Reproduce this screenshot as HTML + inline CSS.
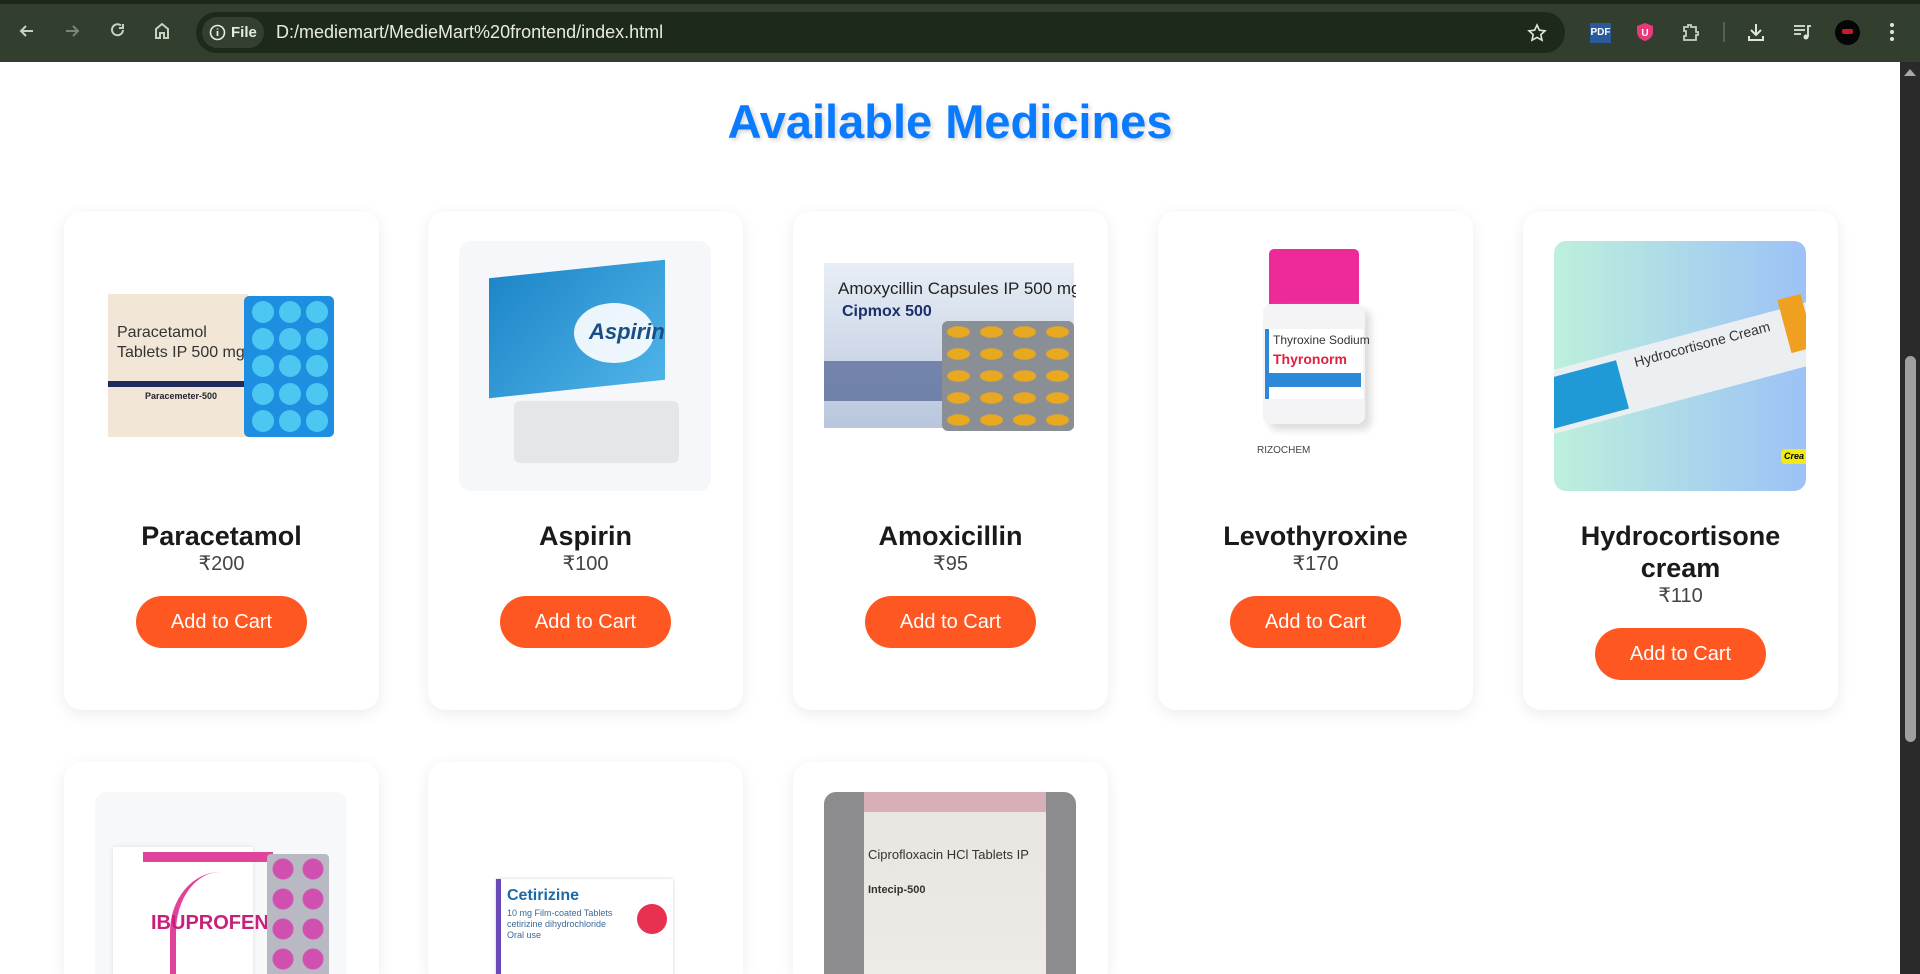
<!DOCTYPE html>
<html style="width:1920px;height:974px;overflow:hidden"><head><meta charset="utf-8"><style>
*{box-sizing:border-box;margin:0;padding:0}
body{width:1920px;height:974px;overflow:hidden;background:#fff;font-family:"Liberation Sans",Arial,sans-serif;position:relative}
.chrome{position:absolute;left:0;top:0;width:1920px;height:62px;background:#323f2f}
.topstrip{position:absolute;left:0;top:0;width:1920px;height:4px;background:#1c2719}
.pill{position:absolute;left:196px;top:12px;width:1369px;height:41px;border-radius:21px;background:#1d2919}
.filechip{position:absolute;left:202px;top:17px;width:62px;height:31px;border-radius:16px;background:#34402f;color:#e6ecdf;font-size:15px;font-weight:bold;line-height:31px;padding-left:29px}
.url{position:absolute;left:276px;top:22px;color:#e8ecdf;font-size:18px}
.ic{position:absolute;top:21px}
.scroll{position:absolute;left:1900px;top:62px;width:20px;height:912px;background:#2a2a2a}
.thumb{position:absolute;left:1905px;top:356px;width:11px;height:386px;background:#9f9f9f;border-radius:6px}
h1{position:absolute;left:0;width:1900px;top:94px;text-align:center;color:#0a7bff;font-size:47px;font-weight:bold;text-shadow:2px 2px 4px rgba(0,0,0,.18)}
.card{position:absolute;width:315px;height:499px;background:#fff;border-radius:18px;box-shadow:0 4px 16px rgba(0,0,0,.08);text-align:center;overflow:hidden}
.img{position:absolute;left:31px;top:30px;width:252px;height:250px;overflow:hidden;border-radius:12px}
.name{position:absolute;left:0;width:315px;top:309px;font-size:27px;font-weight:bold;color:#1a1a1a;line-height:32px}
.price{position:absolute;left:0;width:315px;font-size:20px;color:#444;line-height:24px}
.btn{position:absolute;left:72px;width:171px;height:52px;border-radius:26px;background:#ff5722;color:#fff;font-size:20px;line-height:52px}
.a{position:absolute}
.r2{height:212px;border-radius:18px 18px 0 0}
</style></head><body>
<div class="chrome"></div><div class="topstrip"></div>
<svg class="ic" style="left:17px" width="20" height="20" viewBox="0 0 20 20"><path d="M16 10H4M9 5l-5 5 5 5" stroke="#c7d1c0" stroke-width="2" fill="none"/></svg>
<svg class="ic" style="left:62px" width="20" height="20" viewBox="0 0 20 20"><path d="M4 10h12M11 5l5 5-5 5" stroke="#7b8676" stroke-width="2" fill="none"/></svg>
<svg class="ic" style="left:108px" width="20" height="20" viewBox="0 0 20 20"><path d="M15 9a5.5 5.5 0 1 1-2-4.5M15 3v4h-4" stroke="#c7d1c0" stroke-width="2" fill="none"/></svg>
<svg class="ic" style="left:152px" width="20" height="20" viewBox="0 0 20 20"><path d="M4 17V8l6-5 6 5v9h-4v-5H8v5z" stroke="#c7d1c0" stroke-width="2" fill="none"/></svg>
<div class="pill"></div>
<div class="filechip"><svg style="position:absolute;left:7px;top:7px" width="17" height="17" viewBox="0 0 17 17"><circle cx="8.5" cy="8.5" r="7" stroke="#e6ecdf" stroke-width="1.6" fill="none"/><path d="M8.5 7v5M8.5 4.5v1" stroke="#e6ecdf" stroke-width="1.8"/></svg>File</div>
<div class="url">D:/mediemart/MedieMart%20frontend/index.html</div>
<svg class="ic" style="left:1527px;top:23px" width="20" height="20" viewBox="0 0 20 20"><path d="M10 2l2.4 5.2 5.6.6-4.2 3.8 1.2 5.6L10 14.4 5 17.2l1.2-5.6L2 7.8l5.6-.6z" stroke="#dfe6d8" stroke-width="1.6" fill="none"/></svg>
<div class="a" style="left:1590px;top:23px;width:21px;height:20px;background:#2a5a9a;color:#fff;font-size:10px;font-weight:bold;line-height:20px;text-align:center">PDF</div>
<svg class="ic" style="left:1636px;top:22px" width="18" height="20" viewBox="0 0 18 20"><path d="M9 1l8 3v6c0 5-4 8-8 9-4-1-8-4-8-9V4z" fill="#e83a7a"/><text x="9" y="14" font-size="10" font-weight="bold" fill="#fff" text-anchor="middle" font-family="Liberation Sans">U</text></svg>
<svg class="ic" style="left:1681px;top:22px" width="20" height="20" viewBox="0 0 20 20"><path d="M3 5h4V3h3v2h5v5h2v3h-2v5H3v-4h2V9H3z" stroke="#c7d1c0" stroke-width="1.8" fill="none"/></svg>
<div class="a" style="left:1723px;top:22px;width:2px;height:20px;background:#55614f"></div>
<svg class="ic" style="left:1746px;top:22px" width="20" height="20" viewBox="0 0 20 20"><path d="M10 2v10M5 8l5 5 5-5M3 14v4h14v-4" stroke="#dfe6d8" stroke-width="2" fill="none"/></svg>
<svg class="ic" style="left:1792px;top:22px" width="20" height="20" viewBox="0 0 20 20"><path d="M2 4h11M2 8h11M2 12h7" stroke="#dfe6d8" stroke-width="1.8"/><circle cx="14" cy="15" r="2.5" fill="#dfe6d8"/><path d="M16 15V4h3" stroke="#dfe6d8" stroke-width="1.8" fill="none"/></svg>
<div class="a" style="left:1835px;top:20px;width:25px;height:25px;border-radius:50%;background:#050505"><span style="position:absolute;left:7px;top:9px;width:11px;height:5px;background:#c0202a;border-radius:2px"></span></div>
<svg class="ic" style="left:1888px;top:22px" width="8" height="20" viewBox="0 0 8 20"><circle cx="4" cy="3" r="2" fill="#dfe6d8"/><circle cx="4" cy="10" r="2" fill="#dfe6d8"/><circle cx="4" cy="17" r="2" fill="#dfe6d8"/></svg>

<div class="scroll"></div>
<svg class="a" style="left:1904px;top:68px" width="12" height="8"><path d="M0 8L6 1l6 7z" fill="#a8a8a8"/></svg>
<div class="thumb"></div>

<h1>Available Medicines</h1>

<div class="card" style="left:64px;top:211px">
 <div class="img">
  <div class="a" style="left:13px;top:53px;width:140px;height:143px;background:#f2e6d6"></div>
  <div class="a" style="left:22px;top:82px;font-size:16px;color:#333;text-align:left;line-height:20px">Paracetamol<br>Tablets IP 500 mg</div>
  <div class="a" style="left:13px;top:140px;width:136px;height:6px;background:#1f2a5e"></div>
  <div class="a" style="left:50px;top:150px;font-size:9px;font-weight:bold;color:#223">Paracemeter-500</div>
  <div class="a" style="left:149px;top:55px;width:90px;height:141px;background:#1e8fe0;border-radius:5px;display:grid;grid-template-columns:repeat(3,22px);gap:5px;padding:5px 8px">
   <i style="width:22px;height:22px;border-radius:50%;background:#4cc7f2"></i><i style="width:22px;height:22px;border-radius:50%;background:#4cc7f2"></i><i style="width:22px;height:22px;border-radius:50%;background:#4cc7f2"></i><i style="width:22px;height:22px;border-radius:50%;background:#4cc7f2"></i><i style="width:22px;height:22px;border-radius:50%;background:#4cc7f2"></i><i style="width:22px;height:22px;border-radius:50%;background:#4cc7f2"></i><i style="width:22px;height:22px;border-radius:50%;background:#4cc7f2"></i><i style="width:22px;height:22px;border-radius:50%;background:#4cc7f2"></i><i style="width:22px;height:22px;border-radius:50%;background:#4cc7f2"></i><i style="width:22px;height:22px;border-radius:50%;background:#4cc7f2"></i><i style="width:22px;height:22px;border-radius:50%;background:#4cc7f2"></i><i style="width:22px;height:22px;border-radius:50%;background:#4cc7f2"></i><i style="width:22px;height:22px;border-radius:50%;background:#4cc7f2"></i><i style="width:22px;height:22px;border-radius:50%;background:#4cc7f2"></i><i style="width:22px;height:22px;border-radius:50%;background:#4cc7f2"></i>
  </div>
 </div>
 <div class="name">Paracetamol</div><div class="price" style="top:341px">₹200</div><div class="btn" style="top:385px">Add to Cart</div>
</div>

<div class="card" style="left:428px;top:211px">
 <div class="img" style="background:#f5f7fa">
  <div class="a" style="left:30px;top:28px;width:176px;height:120px;background:linear-gradient(135deg,#1d86c8,#4fb3e8);transform:skewY(-6deg)"></div>
  <div class="a" style="left:115px;top:62px;width:80px;height:60px;border-radius:50%;background:#fff;opacity:.9"></div>
  <div class="a" style="left:130px;top:78px;font-size:22px;font-weight:bold;color:#1a4f86;font-style:italic">Aspirin</div>
  <div class="a" style="left:55px;top:160px;width:165px;height:62px;background:#e4e6ea;border-radius:6px"></div>
 </div>
 <div class="name">Aspirin</div><div class="price" style="top:341px">₹100</div><div class="btn" style="top:385px">Add to Cart</div>
</div>

<div class="card" style="left:793px;top:211px">
 <div class="img">
  <div class="a" style="left:0;top:22px;width:250px;height:165px;background:linear-gradient(#e8eef6,#b8c6dc)"></div>
  <div class="a" style="left:14px;top:38px;font-size:17px;color:#222;white-space:nowrap">Amoxycillin Capsules IP 500 mg</div>
  <div class="a" style="left:18px;top:62px;font-size:16px;font-weight:bold;color:#1b2f6a">Cipmox 500</div>
  <div class="a" style="left:0;top:120px;width:250px;height:40px;background:#3a4f86;opacity:.6"></div>
  <div class="a" style="left:118px;top:80px;width:132px;height:110px;background:#8a8f96;border-radius:6px;background-image:radial-gradient(ellipse 12px 6px,#e8a820 90%,transparent 100%);background-size:33px 22px"></div>
 </div>
 <div class="name">Amoxicillin</div><div class="price" style="top:341px">₹95</div><div class="btn" style="top:385px">Add to Cart</div>
</div>

<div class="card" style="left:1158px;top:211px">
 <div class="img">
  <div class="a" style="left:80px;top:8px;width:90px;height:57px;background:#ee2a9a;border-radius:5px 5px 0 0"></div>
  <div class="a" style="left:74px;top:63px;width:102px;height:120px;background:#f4f4f6;border-radius:8px;box-shadow:6px 6px 8px #ddd"></div>
  <div class="a" style="left:76px;top:88px;width:98px;height:70px;background:#fff;border-left:4px solid #2e88d8"></div>
  <div class="a" style="left:84px;top:92px;font-size:12px;color:#333">Thyroxine Sodium</div>
  <div class="a" style="left:84px;top:110px;font-size:14px;font-weight:bold;color:#e02040">Thyronorm</div>
  <div class="a" style="left:78px;top:132px;width:94px;height:14px;background:#2e88d8"></div>
  <div class="a" style="left:68px;top:204px;font-size:10px;color:#444">RIZOCHEM</div>
 </div>
 <div class="name">Levothyroxine</div><div class="price" style="top:341px">₹170</div><div class="btn" style="top:385px">Add to Cart</div>
</div>

<div class="card" style="left:1523px;top:211px">
 <div class="img" style="background:linear-gradient(90deg,#bdf0dc,#a9d4ec 60%,#9cc2f6)">
  <div class="a" style="left:-20px;top:95px;width:300px;height:62px;background:#eceff2;transform:rotate(-15deg)"></div>
  <div class="a" style="left:-20px;top:130px;width:90px;height:50px;background:#1f9ad6;transform:rotate(-15deg)"></div>
  <div class="a" style="left:78px;top:95px;font-size:14px;color:#333;transform:rotate(-15deg);white-space:nowrap">Hydrocortisone Cream</div>
  <div class="a" style="left:230px;top:55px;width:24px;height:55px;background:#f0a020;transform:rotate(-15deg)"></div>
  <div class="a" style="left:227px;top:208px;width:30px;height:15px;background:#f2ea10;border-radius:4px;font-size:9px;font-weight:bold;font-style:italic;line-height:15px;padding-left:3px;text-align:left">Crea</div>
 </div>
 <div class="name">Hydrocortisone<br>cream</div><div class="price" style="top:373px">₹110</div><div class="btn" style="top:417px">Add to Cart</div>
</div>

<div class="card r2" style="left:64px;top:762px">
 <div class="img" style="background:#f7f8fa">
  <div class="a" style="left:18px;top:55px;width:140px;height:200px;background:#fff;box-shadow:0 0 4px #ddd"></div>
  <div class="a" style="left:48px;top:60px;width:130px;height:10px;background:#e0449a"></div>
  <div class="a" style="left:75px;top:80px;width:100px;height:120px;border-radius:50% 0 0 0;border-left:6px solid #e0449a"></div>
  <div class="a" style="left:56px;top:120px;font-size:20px;font-weight:bold;color:#c8207a">IBUPROFEN</div>
  <div class="a" style="left:172px;top:62px;width:62px;height:190px;background:#b9b9c4;border-radius:4px;background-image:radial-gradient(circle 11px,#d050b0 90%,transparent 100%);background-size:30px 30px;background-position:1px 0"></div>
 </div>
</div>
<div class="card r2" style="left:428px;top:762px">
 <div class="img">
  <div class="a" style="left:37px;top:87px;width:177px;height:110px;background:#fff;border-left:5px solid #6a4ab8;box-shadow:0 0 3px #ccc"></div>
  <div class="a" style="left:48px;top:95px;font-size:16px;font-weight:bold;color:#1a6aa8">Cetirizine</div>
  <div class="a" style="left:48px;top:116px;font-size:9px;color:#3a6a98;text-align:left;line-height:11px">10 mg Film-coated Tablets<br>cetirizine dihydrochloride<br>Oral use</div>
  <div class="a" style="left:178px;top:112px;width:30px;height:30px;border-radius:50%;background:#e83050"></div>
 </div>
</div>
<div class="card r2" style="left:793px;top:762px">
 <div class="img" style="background:#8c8c8e">
  <div class="a" style="left:40px;top:0;width:182px;height:250px;background:linear-gradient(#e8e4e0,#f0ece8)"></div>
  <div class="a" style="left:40px;top:0;width:182px;height:20px;background:#d8aeb8"></div>
  <div class="a" style="left:44px;top:55px;font-size:13px;color:#333;white-space:nowrap">Ciprofloxacin HCl Tablets IP</div>
  <div class="a" style="left:44px;top:92px;font-size:11px;font-weight:bold;color:#333">Intecip-500</div>
 </div>
</div>
</body></html>
